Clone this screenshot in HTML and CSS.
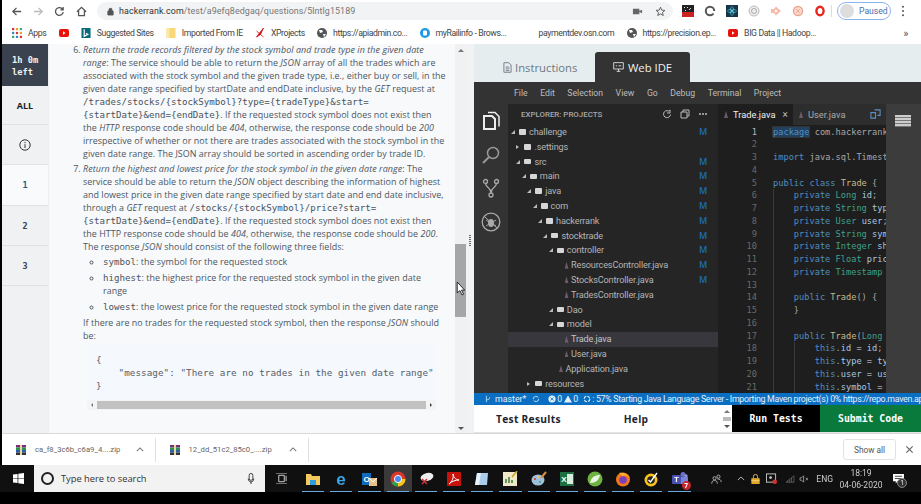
FILE: index.html
```html
<!DOCTYPE html>
<html lang="en">
<head>
<meta charset="utf-8">
<title>HackerRank test</title>
<link rel="stylesheet" href="styles.css">
</head>
<body>
<div class="screen">
  <header class="toolbar">
    <svg class="nav" viewBox="0 0 12 12"><path d="M11 6H2M6 2 2 6l4 4" class="st dk"/></svg>
    <svg class="nav" viewBox="0 0 12 12"><path d="M1 6h9M6 2l4 4-4 4" class="st lt"/></svg>
    <svg class="nav" viewBox="0 0 12 12"><path d="M10 6.500A4.200 4.200 0 1 1 8.800 3L10 4.200M10 1v3.200H7" class="st dk"/></svg>
    <svg class="nav" viewBox="0 0 12 12"><path d="M1 6.200 6 1.500l5 4.700M2.800 5v5.500h6.400V5" class="st dk"/></svg>
    <div class="omnibox">
      <svg class="lock" viewBox="0 0 8 10"><path d="M1 4.500h6V9H1zM2.300 4.500V3a1.700 1.700 0 0 1 3.400 0v1.500" fill="#555" stroke="#555"/></svg>
      <span class="url"><b>hackerrank.com</b>/test/a9efq8edgaq/questions/5lntlg15189</span>
      <span class="grow"></span>
      <svg class="omni-ic" viewBox="0 0 12 12"><path d="M1 3h7v6H1zM8 5.500 11 4v4L8 6.500" fill="#666"/></svg>
      <svg class="omni-ic" viewBox="0 0 12 12"><path d="m6 1.300 1.400 3.200 3.400.3-2.600 2.200.8 3.400L6 8.600l-3 1.800.8-3.400L1.200 4.800l3.400-.3z" fill="none" stroke="#555"/></svg>
    </div>
    <div class="exts">
      <svg viewBox="0 0 12 12"><rect width="12" height="12" fill="#222"/><rect y="7" width="12" height="5" fill="#c22"/><path d="M2 2h1v1H2zm3 0h1v1H5zm3 1h1v1H8zM3 5h1v1H3zm4-1h1v1H7z" fill="#ddd"/></svg>
      <svg viewBox="0 0 12 12"><circle cx="6" cy="6" r="4.200" fill="none" stroke="#555" stroke-width="2"/><path d="M7 6h5v5z" fill="#fff"/></svg>
      <svg viewBox="0 0 12 12"><rect width="12" height="12" fill="#17364a"/><circle cx="6" cy="6" r="1.200" fill="#5cd"/><ellipse cx="6" cy="6" rx="4.500" ry="1.800" fill="none" stroke="#5cd" stroke-width=".6"/><ellipse cx="6" cy="6" rx="1.800" ry="4.500" fill="none" stroke="#5cd" stroke-width=".6"/></svg>
      <svg viewBox="0 0 12 12"><circle cx="6" cy="6" r="5" fill="#eee" stroke="#bbb"/><circle cx="6" cy="6" r="2.500" fill="none" stroke="#aaa"/></svg>
      <svg viewBox="0 0 12 12"><path d="M1 4h3l2-2.500L11 6 6 10.500 4 8H1z" fill="#f9b9a8"/><circle cx="6" cy="6" r="1.300" fill="#fff"/></svg>
      <svg viewBox="0 0 12 12"><circle cx="6" cy="6" r="4.500" fill="#fbdcd2" stroke="#f0a58e" stroke-width="1.500"/><path d="m4 4 4 4M8 4 4 8" stroke="#f0a58e"/></svg>
      <svg viewBox="0 0 12 12"><ellipse cx="6" cy="6" rx="3.600" ry="4.300" fill="none" stroke="#e8271c" stroke-width="2.400"/></svg>
    </div>
    <span class="tb-sep"></span>
    <div class="paused"><span class="avatar"></span>Paused</div>
    <svg class="menu-dots" viewBox="0 0 4 14"><circle cx="2" cy="2" r="1.200"/><circle cx="2" cy="7" r="1.200"/><circle cx="2" cy="12" r="1.200"/></svg>
  </header>

  <nav class="bookmarks">
    <span class="bm"><svg class="bm-i" viewBox="0 0 9 9"><path d="M0 0h2v2H0z" fill="#d33"/><path d="M3.500 0h2v2h-2z" fill="#e8a020"/><path d="M7 0h2v2H7z" fill="#3a7"/><path d="M0 3.500h2v2H0z" fill="#38c"/><path d="M3.500 3.500h2v2h-2z" fill="#d33"/><path d="M7 3.500h2v2H7z" fill="#e8a020"/><path d="M0 7h2v2H0z" fill="#3a7"/><path d="M3.500 7h2v2h-2z" fill="#38c"/><path d="M7 7h2v2H7z" fill="#d33"/></svg>Apps</span>
    <span class="bm"><svg class="bm-i yt" viewBox="0 0 10 8"><rect width="10" height="8" rx="2" fill="#e8120c"/><path d="m4 2.200 2.500 1.800L4 5.800z" fill="#fff"/></svg></span>
    <span class="bm"><svg class="bm-i" viewBox="0 0 10 11"><rect width="10" height="11" fill="#0b6a7a"/><path d="M3 1.500v7.500l4-2L5 5.800" fill="none" stroke="#fff" stroke-width="1.300"/></svg>Suggested Sites</span>
    <span class="bm"><svg class="bm-i" viewBox="0 0 9 10"><path d="M0 0h9v10H0z" fill="#f8d878"/><path d="M0 0h3v10H0z" fill="#fbe7a6"/></svg>Imported From IE</span>
    <span class="bm"><svg class="bm-i" viewBox="0 0 9 10"><path d="M8 0 4 5l-3 4 4-2.500zM1 3l7 6" stroke="#c11" fill="#c11" stroke-width=".8"/></svg>XProjects</span>
    <span class="bm"><svg class="bm-i" viewBox="0 0 10 10"><circle cx="5" cy="5" r="5" fill="#555"/><path d="M2 2h3l1 2-3 1zM6 6h3L7 9z" fill="#fff"/></svg>https://apiadmin.co...</span>
    <span class="bm"><svg class="bm-i" viewBox="0 0 10 10"><circle cx="5" cy="5" r="5" fill="#1e9ae6"/><rect x="3" y="2.500" width="4" height="5" rx="1" fill="#fff"/></svg>myRailinfo - Brows...</span>
    <span class="bm bm-far">paymentdev.osn.com</span>
    <span class="bm"><svg class="bm-i" viewBox="0 0 10 10"><circle cx="5" cy="5" r="5" fill="#555"/><path d="M2 2h3l1 2-3 1zM6 6h3L7 9z" fill="#fff"/></svg>https://precision.ep...</span>
    <span class="bm"><svg class="bm-i yt" viewBox="0 0 10 8"><rect width="10" height="8" rx="2" fill="#e8120c"/><path d="m4 2.200 2.500 1.800L4 5.800z" fill="#fff"/></svg>BIG Data || Hadoop...</span>
    <span class="grow"></span>
    <span class="more">»</span>
  </nav>

  <main class="app">
    <aside class="rail">
      <div class="timer">1h 0m<br>left</div>
      <div class="rail-item rail-all">ALL</div>
      <div class="rail-item"><svg class="info" viewBox="0 0 12 12"><circle cx="6" cy="6" r="5.200" fill="none" stroke="#333"/><path d="M6 3v1.200M6 5.200V9" stroke="#333"/></svg></div>
      <div class="rail-item rail-active">1</div>
      <div class="rail-item rail-num">2</div>
      <div class="rail-item rail-num">3</div>
    </aside>

    <section class="problem">
      <ol class="steps" start="6">
        <li><i>Return the trade records filtered by the stock symbol and trade type in the given date<br>range</i>: The service should be able to return the <i>JSON</i> array of all the trades which are<br>associated with the stock symbol and the given trade type, i.e., either buy or sell, in the<br>given date range specified by startDate and endDate inclusive, by the <i>GET</i> request at<br><code>/trades/stocks/{stockSymbol}?type={tradeType}&amp;start=</code><br><code>{startDate}&amp;end={endDate}</code>. If the requested stock symbol does not exist then<br>the <i>HTTP</i> response code should be <i>404</i>, otherwise, the response code should be <i>200</i><br>irrespective of whether or not there are trades associated with the stock symbol in the<br>given date range. The JSON array should be sorted in ascending order by trade ID.</li>
        <li><i>Return the highest and lowest price for the stock symbol in the given date range</i>: The<br>service should be able to return the <i>JSON</i> object describing the information of highest<br>and lowest price in the given date range specified by start date and end date inclusive,<br>through a <i>GET</i> request at <code>/stocks/{stockSymbol}/price?start=</code><br><code>{startDate}&amp;end={endDate}</code>. If the requested stock symbol does not exist then<br>the HTTP response code should be <i>404</i>, otherwise, the response code should be <i>200</i>.<br>The response <i>JSON</i> should consist of the following three fields:
          <ul class="fields">
            <li><code>symbol</code>: the symbol for the requested stock</li>
            <li><code>highest</code>: the highest price for the requested stock symbol in the given date<br>range</li>
            <li><code>lowest</code>: the lowest price for the requested stock symbol in the given date range</li>
          </ul>
          <p class="after">If there are no trades for the requested stock symbol, then the response <i>JSON</i> should<br>be:</p>
          <div class="codebox">
<pre>{
    "message": "There are no trades in the given date range"
}</pre>
            <div class="hscroll"><span class="ar-l"></span><span class="hthumb"></span><span class="ar-r"></span></div>
          </div>
        </li>
      </ol>
    </section>

    <div class="vscroll"><span class="ar-u"></span><span class="vgap"></span><span class="vthumb"></span><span class="grow"></span><span class="ar-d"></span></div>
    <div class="gutter"><span class="grip"></span></div>

    <section class="right">
      <div class="tabs">
        <div class="tab"><svg class="tab-i" viewBox="0 0 10 12"><path d="M1 .7h5.500L9 3.200v8.100H1zM3 5.500h4M3 7.500h4M3 9.500h4" fill="none" stroke="#6d7882"/></svg>Instructions</div>
        <div class="tab tab-on"><svg class="tab-i2" viewBox="0 0 12 11"><path d="M.7.7h10.600v7H.7zM4 10.300h4M6 7.700v2.600M3 4.200h1.500M6 4.200h3" fill="none" stroke="#ddd"/></svg>Web IDE</div>
      </div>
      <div class="menubar"><span>File</span><span>Edit</span><span>Selection</span><span>View</span><span>Go</span><span>Debug</span><span>Terminal</span><span>Project</span></div>
      <div class="ide">
        <div class="activity">
          <svg viewBox="0 0 20 20"><path d="M3 5h8l3 3v10H3z" fill="none" stroke="#eee" stroke-width="2"/><path d="M7 1.500h7l4 4v10" fill="none" stroke="#eee" stroke-width="1.500"/></svg>
          <svg viewBox="0 0 20 20"><circle cx="12" cy="8" r="5.500" fill="none" stroke="#999" stroke-width="1.500"/><path d="M8 12 2 18" stroke="#999" stroke-width="2"/></svg>
          <svg viewBox="0 0 20 20"><circle cx="4.500" cy="3.500" r="2" fill="none" stroke="#aaa" stroke-width="1.300"/><circle cx="15.500" cy="3.500" r="2" fill="none" stroke="#aaa" stroke-width="1.300"/><circle cx="10" cy="17" r="2" fill="none" stroke="#aaa" stroke-width="1.300"/><path d="M4.500 5.500C5 10 10 9 10 15M15.500 5.500C15 10 10 9 10 15" fill="none" stroke="#aaa" stroke-width="1.300"/></svg>
          <svg viewBox="0 0 20 20"><circle cx="10" cy="10" r="8.800" fill="none" stroke="#aaa" stroke-width="1.300"/><ellipse cx="10" cy="11" rx="3" ry="4" fill="#aaa"/><path d="M4 5l12 11M5 8l3 2M5 14l3-2M15 8l-3 2M15 14l-3-2" stroke="#aaa"/></svg>
        </div>
        <div class="explorer">
          <div class="ex-head"><span>EXPLORER: PROJECTS</span><span class="grow"></span>
            <svg viewBox="0 0 10 10"><path d="M8.500 5.500A3.500 3.500 0 1 1 6.500 2L8 1v3H5" fill="none" stroke="#bbb"/></svg>
            <svg viewBox="0 0 10 10"><path d="M1 3h6v6H1zM3 3V1h6v6H7" fill="none" stroke="#bbb"/></svg>
            <svg viewBox="0 0 10 10"><path d="M1 5h8" stroke="#bbb" stroke-width="1.600" stroke-dasharray="2 1"/></svg>
          </div>
          <div class="tree">
            <div class="row d0"><i class="open"></i><b class="folder"></b><span>challenge</span><em>M</em></div>
            <div class="row d1"><i class="closed"></i><b class="folder"></b><span>.settings</span></div>
            <div class="row d1"><i class="open"></i><b class="folder"></b><span>src</span><em>M</em></div>
            <div class="row d2"><i class="open"></i><b class="folder"></b><span>main</span><em>M</em></div>
            <div class="row d3"><i class="open"></i><b class="folder"></b><span>java</span><em>M</em></div>
            <div class="row d4"><i class="open"></i><b class="folder"></b><span>com</span><em>M</em></div>
            <div class="row d5"><i class="open"></i><b class="folder"></b><span>hackerrank</span><em>M</em></div>
            <div class="row d6"><i class="open"></i><b class="folder"></b><span>stocktrade</span><em>M</em></div>
            <div class="row d7"><i class="open"></i><b class="folder"></b><span>controller</span><em>M</em></div>
            <div class="row d9f"><b class="jfile"></b><span>ResourcesController.java</span><em>M</em></div>
            <div class="row d9f"><b class="jfile"></b><span>StocksController.java</span><em>M</em></div>
            <div class="row d9f"><b class="jfile"></b><span>TradesController.java</span></div>
            <div class="row d7"><i class="open"></i><b class="folder"></b><span>Dao</span></div>
            <div class="row d7"><i class="open"></i><b class="folder"></b><span>model</span></div>
            <div class="row d9f row-sel"><b class="jfile"></b><span>Trade.java</span></div>
            <div class="row d9f"><b class="jfile"></b><span>User.java</span></div>
            <div class="row d8f"><b class="jfile"></b><span>Application.java</span></div>
            <div class="row d3"><i class="closed"></i><b class="folder"></b><span>resources</span></div>
          </div>
        </div>
        <div class="editor">
          <div class="ed-tabs">
            <div class="ed-tab ed-on"><b class="jfile"></b><span>Trade.java</span><u>×</u></div>
            <div class="ed-tab ed-off"><b class="jfile"></b><span>User.java</span></div>
            <div class="ed-action"><svg viewBox="0 0 12 12"><path d="M1 4h5v6H1zM5 1h6v6H8" fill="none" stroke="#5b8fc0" stroke-width="1.200"/></svg></div>
          </div>
          <div class="code">
            <div class="nums"><span class="cur">1</span><span>2</span><span>3</span><span>4</span><span>5</span><span>6</span><span>7</span><span>8</span><span>9</span><span>10</span><span>11</span><span>12</span><span>13</span><span>14</span><span>15</span><span>16</span><span>17</span><span>18</span><span>19</span><span>20</span><span>21</span></div>
            <div class="src">
              <div><a class="sel">package</a> com.hackerrank.stocktrade.model;</div>
              <div></div>
              <div><a>import</a> java.sql.Timestamp;</div>
              <div></div>
              <div><a>public class</a> <q>Trade</q> {</div>
              <div><s></s><a>private</a> <ins>Long</ins> <var>id</var>;</div>
              <div><s></s><a>private</a> <ins>String</ins> <var>type</var>;</div>
              <div><s></s><a>private</a> <ins>User</ins> <var>user</var>;</div>
              <div><s></s><a>private</a> <ins>String</ins> <var>symbol</var>;</div>
              <div><s></s><a>private</a> <ins>Integer</ins> <var>shares</var>;</div>
              <div><s></s><a>private</a> <ins>Float</ins> <var>price</var>;</div>
              <div><s></s><a>private</a> <ins>Timestamp</ins> <var>timestamp</var>;</div>
              <div><s></s></div>
              <div><s></s><a>public</a> <q>Trade</q>() {</div>
              <div><s></s>}</div>
              <div><s></s></div>
              <div><s></s><a>public</a> <q>Trade</q>(<ins>Long</ins> <var>id</var>, <ins>String</ins> <var>type</var>);</div>
              <div><s></s><s></s><a>this</a>.<var>id</var> = <var>id</var>;</div>
              <div><s></s><s></s><a>this</a>.<var>type</var> = <var>type</var>;</div>
              <div><s></s><s></s><a>this</a>.<var>user</var> = <var>user</var>;</div>
              <div><s></s><s></s><a>this</a>.<var>symbol</var> = <var>symbol</var>;</div>
            </div>
          </div>
        </div>
        <div class="panel-side"><span class="hamb"></span></div>
      </div>
      <div class="status">
        <svg viewBox="0 0 8 10"><path d="M2 1v8M2 6c3 0 4-1 4-3" fill="none" stroke="#cfe6f8"/></svg><span class="st-branch">master*</span>
        <svg class="st-sync" viewBox="0 0 10 10"><path d="M1.500 5A3.500 3.500 0 0 1 8 3.500M8.500 5A3.500 3.500 0 0 1 2 6.500" fill="none" stroke="#e4f1fb"/></svg>
        <svg class="st-err" viewBox="0 0 10 10"><circle cx="5" cy="5" r="4.500" fill="#e4f1fb"/><path d="m3 3 4 4M7 3 3 7" stroke="#0a6fc2"/></svg><span>0</span>
        <svg class="st-warn" viewBox="0 0 10 10"><path d="M5 .5 10 9.500H0z" fill="#e4f1fb"/></svg><span>0</span>
        <svg class="st-spin" viewBox="0 0 10 10"><circle cx="5" cy="5" r="3.500" fill="none" stroke="#e4f1fb" stroke-width="1.400" stroke-dasharray="4 1.500"/></svg>
        <span class="st-msg">: 57% Starting Java Language Server - Importing Maven project(s) 0% https://repo.maven.apache.org</span>
      </div>
      <div class="actions">
        <button class="link-btn lb-test">Test Results</button>
        <button class="link-btn lb-help">Help</button>
        <span class="grow"></span>
        <div class="mini-scroll"><span class="ar-u"></span><span class="mini-thumb"></span><span class="ar-d"></span></div>
        <button class="run">Run Tests</button>
        <button class="submit">Submit Code</button>
      </div>
    </section>
    <svg class="cursor" viewBox="0 0 10 14"><path d="M1 1v10l2.500-2 2 4 1.500-.7-2-3.800H8z" fill="#fff" stroke="#111" stroke-width=".8"/></svg>
  </main>

  <footer class="downloads">
    <div class="dl"><svg class="rar" viewBox="0 0 12 12"><path d="M1 1h10v2.500H1z" fill="#7b2d7b"/><path d="M1 3.500h10V6H1z" fill="#2f8f4e"/><path d="M1 6h10v2.500H1z" fill="#2d5fb0"/><path d="M1 8.500h10V11H1z" fill="#333"/><path d="M5 1h2v10H5z" fill="#e8d9a0"/></svg><span class="dl-name">ca_f8_3c6b_c6a9_4....zip</span><svg class="chev" viewBox="0 0 10 6"><path d="m1 5 4-4 4 4" fill="none" stroke="#777" stroke-width="1.300"/></svg></div>
    <div class="dl"><svg class="rar" viewBox="0 0 12 12"><path d="M1 1h10v2.500H1z" fill="#7b2d7b"/><path d="M1 3.500h10V6H1z" fill="#2f8f4e"/><path d="M1 6h10v2.500H1z" fill="#2d5fb0"/><path d="M1 8.500h10V11H1z" fill="#333"/><path d="M5 1h2v10H5z" fill="#e8d9a0"/></svg><span class="dl-name">12_dd_51c2_85c0_....zip</span><svg class="chev" viewBox="0 0 10 6"><path d="m1 5 4-4 4 4" fill="none" stroke="#777" stroke-width="1.300"/></svg></div>
    <span class="grow"></span>
    <button class="show-all">Show all</button>
    <svg class="dl-x" viewBox="0 0 10 10"><path d="m1.500 1.500 7 7M8.500 1.500l-7 7" stroke="#666" stroke-width="1.300"/></svg>
  </footer>

  <div class="taskbar">
    <svg class="win" viewBox="0 0 12 12"><path d="M0 1.700 5 1v4.600H0zM5.800.9 12 0v5.600H5.800zM0 6.400h5V11l-5-.7zM5.800 6.400H12V12l-6.200-.9z" fill="#fff"/></svg>
    <div class="search"><span class="ring"></span><span>Type here to search</span><span class="grow"></span><svg class="mic" viewBox="0 0 8 12"><rect x="2" y="0.500" width="4" height="7.500" rx="2" fill="none" stroke="#333"/><path d="M1 6c0 5 6 5 6 0M4 9.500V12" fill="none" stroke="#333"/></svg></div>
    <svg class="tv" viewBox="0 0 12 12"><path d="M3 2.500h6v7H3zM0 0h12M0 12h12M11 3v6" fill="none" stroke="#ddd"/></svg>
    <div class="apps">
      <span class="tk on"><svg viewBox="0 0 16 16"><path d="M1 3h5l1 2h8v9H1z" fill="#f4c95d"/><path d="M5 9h6v5H5z" fill="#2d9fe0"/></svg></span>
      <span class="tk on"><svg viewBox="0 0 16 16"><text x="8" y="13.500" text-anchor="middle" class="ie">e</text></svg></span>
      <span class="tk on"><svg viewBox="0 0 16 16"><rect x="1" y="2" width="9" height="12" fill="#0f6cbd"/><text x="5.500" y="11" text-anchor="middle" class="ol">O</text><path d="M8 7h8v8H8z" fill="#e8c08c"/><path d="m8 7 4 4 4-4" fill="none" stroke="#fff"/></svg></span>
      <span class="tk on act"><svg viewBox="0 0 16 16"><circle cx="8" cy="8" r="7.500" fill="#d9372c"/><path d="M8 8 1.500 12A7.500 7.500 0 0 0 8 15.500z" fill="#2e9e4f"/><path d="M8 8h7.500A7.500 7.500 0 0 1 8 15.500z" fill="#f5c518"/><circle cx="8" cy="8" r="3.600" fill="#4a8af4" stroke="#fff"/></svg></span>
      <span class="tk on"><svg viewBox="0 0 16 16"><ellipse cx="9" cy="6" rx="6.500" ry="4" fill="#eee" transform="rotate(-15 9 6)"/><path d="m4 8 5 5M9 8l-5 5" stroke="#c33" stroke-width="1.500"/></svg></span>
      <span class="tk on"><svg viewBox="0 0 16 16"><rect x="1" y="1" width="14" height="14" rx="1" fill="#c8120c"/><path d="M3 13c3-2 5-7 4-10 0 3 3 6 6 6-3 0-7 1-10 4z" fill="none" stroke="#fff"/></svg></span>
      <span class="tk on"><svg viewBox="0 0 16 16"><path d="M3 2h11l-1 12H1z" fill="#a9cdea"/><path d="M3 2h4L5 14H1z" fill="#e8f2fa"/></svg></span>
      <span class="tk on"><svg viewBox="0 0 16 16"><rect x="1" y="1" width="14" height="14" fill="#efe9c8"/><path d="M4 12V8M7 12V6M10 12V9" stroke="#3a7a3a" stroke-width="1.500"/><path d="m15 0-5 6" stroke="#c9a020" stroke-width="1.500"/></svg></span>
      <span class="tk on"><svg viewBox="0 0 16 16"><ellipse cx="7" cy="9" rx="6.500" ry="5.500" fill="#9fc0dc"/><circle cx="4" cy="8" r="1" fill="#d33"/><circle cx="7" cy="6" r="1" fill="#fc3"/><circle cx="9" cy="11" r="1" fill="#3a6"/><path d="m15 1-5 6" stroke="#d89040" stroke-width="2"/></svg></span>
      <span class="tk on"><svg viewBox="0 0 16 16"><rect x="1" y="1" width="14" height="14" fill="#1d6f42"/><rect x="8" y="3" width="6" height="10" fill="#d8eedd"/><text x="4.800" y="11" text-anchor="middle" class="xl">X</text></svg></span>
      <span class="tk on"><svg viewBox="0 0 16 16"><circle cx="8" cy="8" r="7.500" fill="#6db33f"/><path d="M3 12c1-6 5-8 10-8-1 5-4 8-10 8z" fill="#e8f5df"/></svg></span>
      <span class="tk on"><svg viewBox="0 0 16 16"><circle cx="8" cy="8.500" r="7" fill="#f2761b"/><circle cx="8" cy="9" r="3.800" fill="#7a3fc0"/><path d="M4 2c4-1 9 1 11 5-3-3-6-3-8-2z" fill="#ffb12a"/></svg></span>
      <span class="tk on"><svg viewBox="0 0 16 16"><circle cx="8" cy="9" r="6.500" fill="#f7c21a"/><circle cx="8" cy="9" r="3.800" fill="#222"/><path d="m5.500 9 2 2L14 2" fill="none" stroke="#fff" stroke-width="1.400"/></svg></span>
      <span class="tk on teams"><svg viewBox="0 0 16 16"><circle cx="11" cy="3.500" r="2.500" fill="#6b72c8"/><circle cx="14" cy="5" r="1.700" fill="#8f95dc"/><rect x="7" y="6" width="9" height="7" rx="1" fill="#7b83d8"/><rect x="0" y="4" width="9" height="9" rx="1" fill="#4a52b0"/><text x="4.500" y="11" text-anchor="middle" class="tm">T</text></svg><b>7</b></span>
    </div>
    <span class="grow"></span>
    <div class="tray">
      <svg class="people" viewBox="0 0 14 12"><circle cx="9.500" cy="3" r="2" fill="none" stroke="#ccc"/><circle cx="4.500" cy="5" r="2" fill="none" stroke="#ccc"/><path d="M1 12c0-3 1-4 3.500-4S8 9 8 12M8 6c3 0 5 1 5 4" fill="none" stroke="#ccc"/></svg>
      <svg class="chevup" viewBox="0 0 10 6"><path d="m1 5 4-4 4 4" fill="none" stroke="#ddd"/></svg>
      <svg class="t-lock" viewBox="0 0 10 12"><rect y="5" width="10" height="7" fill="#e0a92c"/><path d="M2.500 5V3a2.500 2.500 0 0 1 5 0v2M0 8h10" fill="none" stroke="#f0d27a"/></svg>
      <svg class="t-shield" viewBox="0 0 12 12"><rect x=".5" y="1" width="10" height="9" fill="none" stroke="#ccc"/><circle cx="5" cy="5" r="1.500" fill="#ccc"/><circle cx="9.500" cy="9.500" r="2.500" fill="#d9322a"/></svg>
      <svg class="t-wifi" viewBox="0 0 12 10"><path d="M1 9 11 1v8zM3 9V7.500M5.500 9V5.500M8 9V3.500" fill="none" stroke="#666"/></svg>
      <svg class="t-vol" viewBox="0 0 12 10"><path d="M1 3.500h2L5.500 1v8L3 6.500H1zM8 3.500l3 3M11 3.500l-3 3" fill="none" stroke="#ccc" stroke-width=".8"/></svg>
      <span class="eng">ENG</span>
      <div class="clock"><span>18:19</span><span>04-06-2020</span></div>
      <div class="notif"><svg viewBox="0 0 12 11"><path d="M0 0h12v8H5L3 10.500V8H0z" fill="#fff"/><path d="M2 2.500h8M2 5h8" stroke="#333"/></svg><b>1</b></div>
    </div>
  </div>
  <div class="bottom-band"></div>
</div>
</body>
</html>
```

FILE: styles.css
```css
* { box-sizing: border-box; }
html, body { margin: 0; padding: 0; width: 921px; height: 504px; overflow: hidden; background: #000; }
body { font-family: "Open Sans", "Liberation Sans", sans-serif; }
svg { display: block; flex: none; }
button { font-family: inherit; border: 0; padding: 0; }
.grow { flex: 1 1 auto; }

.screen { position: relative; width: 921px; height: 504px; display: flex; flex-direction: column; padding-left: 2px; filter: blur(.35px); }

/* browser toolbar */
.toolbar { height: 22px; background: #fff; display: flex; align-items: center; padding-left: 9px; flex: none; }
.nav { width: 11px; height: 11px; margin-right: 10.500px; }
.st { fill: none; stroke-width: 1.400; }
.dk { stroke: #555; }
.lt { stroke: #bbb; }
.omnibox { width: 576px; height: 18px; background: #f1f3f4; border-radius: 9px; display: flex; align-items: center; padding: 0 7px 0 10px; }
.lock { width: 7px; height: 9px; margin-right: 5px; }
.url { font: 8.900px "Roboto", sans-serif; color: #777; letter-spacing: .1px; }
.url b { font-weight: 400; color: #333; }
.omni-ic { width: 11px; height: 11px; margin-left: 12px; }
.exts { display: flex; gap: 10px; margin-left: 9px; }
.exts svg { width: 12px; height: 12px; }
.tb-sep { width: 1px; height: 12px; background: #ddd; margin: 0 5px; }
.paused { width: 54px; height: 18px; border: 1px solid #8ab4f0; border-radius: 9px; font: 8.600px "Roboto", sans-serif; color: #4a6fa8; display: flex; align-items: center; gap: 5px; padding-left: 2px; }
.avatar { width: 14px; height: 14px; border-radius: 50%; background: #ddd; }
.menu-dots { width: 4px; height: 12px; margin-left: 10px; fill: #555; }

/* bookmarks */
.bookmarks { height: 22px; background: #fff; display: flex; align-items: center; padding: 0 13px 0 10px; gap: 12.200px; font: 8.700px "Roboto", sans-serif; letter-spacing: -.38px; color: #444; flex: none; }
.bm { display: flex; align-items: center; gap: 6px; white-space: nowrap; }
.bm-i { width: 10px; height: 10px; }
.yt { height: 8px; }
.bm-far { margin-left: 20px; }
.more { font-size: 11px; color: #555; }

/* main area */
.app { height: 389px; display: flex; background: #f3f5f6; flex: none; overflow: hidden; }
.rail { width: 47px; flex: none; background: #eff1f2; font-family: "Open Sans", sans-serif; border-right: 1px solid #eceef0; }
.timer { height: 42px; background: #39424e; color: #f2f2f2; font: 700 8.700px/12px "DejaVu Sans Mono", monospace; padding: 10px 0 0 10px; }
.rail-item { height: 40.300px; padding-top: 1px; display: flex; align-items: center; justify-content: center; border-bottom: 1px solid #dfe2e5; font-weight: 700; font-size: 8.500px; color: #39424e; }
.rail-all { height: 39px; padding-top: 0; color: #222; font-size: 9px; }
.rail-active { background: #f8fafc; color: #1d5e85; font-family: "DejaVu Sans Mono", monospace; }
.rail-num { font-family: "DejaVu Sans Mono", monospace; }
.info { width: 12px; height: 12px; }

.problem { width: 406px; flex: none; background: #f7f9fb; color: #4d5661; font-size: 8.950px; line-height: 13px; letter-spacing: .03px; white-space: nowrap; overflow: hidden; }
.problem i { letter-spacing: .08px; }
.steps { margin: -1.500px 0 0; padding: 0 0 0 34px; }
.steps > li { margin-bottom: 2px; }
.problem code { font: 9.150px "DejaVu Sans Mono", monospace; color: #4a535d; letter-spacing: 0; }
.fields { margin: 2px 0 0; padding: 0 0 0 20px; list-style: circle; }
.fields li { margin-bottom: 3px; }
.after { margin: 3px 0 0; }
.codebox { margin: 3.500px 0 0 4px; width: 349px; height: 65px; background: #f5f8fc; display: flex; flex-direction: column; }
.codebox pre { margin: 0; padding: 8px 0 0 9px; font: 9.300px/13.200px "DejaVu Sans Mono", monospace; color: #555e68; flex: 1; }
.hscroll { height: 10px; background: #f3f4f6; display: flex; align-items: center; padding: 0 4px; }
.hthumb { flex: 1; height: 8px; background: #c1c1c1; margin: 0 4px; }
.ar-l { border: 2.500px solid transparent; border-right-color: #777; border-left: 0; }
.ar-r { border: 2.500px solid transparent; border-left-color: #444; border-right: 0; }
.ar-u { border: 3px solid transparent; border-bottom-color: #777; border-top: 0; display: block; }
.ar-d { border: 3px solid transparent; border-top-color: #555; border-bottom: 0; display: block; }

.vscroll { width: 11px; flex: none; background: #f1f1f1; display: flex; flex-direction: column; align-items: center; padding: 5px 0 3px; }
.vgap { height: 192px; }
.vthumb { width: 11px; height: 73px; background: #a6a6a6; }
.gutter { width: 8px; flex: none; background: #f0f2f3; display: flex; justify-content: center; padding-top: 191px; }
.grip { width: 2px; height: 12px; background: repeating-linear-gradient(#666 0 1px, transparent 1px 2px); }

/* right pane */
.right { flex: 1; min-width: 0; display: flex; flex-direction: column; background: #e6edef; }
.tabs { height: 38px; flex: none; display: flex; align-items: flex-end; padding-left: 29px; }
.tab { height: 30px; display: flex; align-items: center; gap: 3px; font-size: 11.300px; color: #6d7882; width: 92px; }
.tab-on { width: 95px; background: #333; color: #f0f0f0; border-radius: 3px 3px 0 0; justify-content: center; gap: 4px; }
.tab-i { width: 9px; height: 11px; }
.tab-i2 { width: 11px; height: 10px; }
.menubar { height: 22px; flex: none; background: #333; display: flex; align-items: center; padding-left: 40px; gap: 12.500px; font: 8.700px "Roboto", sans-serif; color: #bdbdbd; }
.ide { height: 289px; flex: none; display: flex; background: #333; font-family: "Roboto", sans-serif; }
.activity { width: 34px; flex: none; display: flex; flex-direction: column; align-items: center; gap: 13.500px; padding-top: 7px; }
.activity svg { width: 20px; height: 20px; }
.explorer { width: 210px; flex: none; background: #252526; overflow: hidden; }
.ex-head { height: 20.600px; display: flex; align-items: center; padding: 0 10px 0 13px; gap: 8px; font-size: 7.900px; font-weight: 500; color: #a8a8a8; white-space: nowrap; }
.ex-head svg { width: 10px; height: 10px; }
.row { height: 14.800px; display: flex; align-items: center; font-size: 9.150px; letter-spacing: -.15px; color: #b4b4b4; white-space: nowrap; padding-right: 11px; }
.row span { flex: 1; }
.row em { font-style: normal; font-size: 9px; color: #1f69ad; font-weight: 500; }
.row i { width: 4px; height: 4px; margin-right: 4px; flex: none; }
.row .open { border-bottom: 4px solid #bbb; border-left: 4px solid transparent; height: 0; width: 0; }
.row .closed { border-left: 3px solid #bbb; border-top: 2.500px solid transparent; border-bottom: 2.500px solid transparent; height: 0; width: 0; margin-right: 5px; }
.folder { width: 7px; height: 5.500px; background: #d6d6d6; margin-right: 3px; flex: none; border-radius: 1px; }
.jfile { width: 4px; height: 7px; background: #6c5a6a; margin-right: 2.500px; flex: none; clip-path: polygon(50% 0, 100% 100%, 0 100%); }
.d0 { padding-left: 3px; }
.d1 { padding-left: 8.400px; }
.d2 { padding-left: 13.800px; }
.d3 { padding-left: 19.200px; }
.d4 { padding-left: 24.600px; }
.d5 { padding-left: 30px; }
.d6 { padding-left: 35.400px; }
.d7 { padding-left: 40.800px; }
.d8f { padding-left: 51px; }
.d9f { padding-left: 56.500px; }
.row-sel { background: #37373d; color: #c4c4c4; }

.editor { width: 168px; flex: none; background: #1e1e1e; overflow: hidden; }
.ed-tabs { height: 21px; display: flex; background: #252526; }
.ed-tab { display: flex; align-items: center; font-size: 9.300px; white-space: nowrap; padding-left: 6px; }
.ed-tab .jfile { margin-right: 5px; }
.ed-on { width: 75px; background: #1e1e1e; color: #eee; }
.ed-on u { text-decoration: none; margin-left: 7px; color: #bbb; font-size: 10px; }
.ed-off { width: 71px; background: #2d2d2d; color: #aaa; }
.ed-action { flex: 1; background: #2d2d2d; display: flex; align-items: center; justify-content: center; }
.ed-action svg { width: 11px; height: 11px; }
.code { display: flex; padding-top: 0.600px; font: 8.660px/12.750px "DejaVu Sans Mono", monospace; }
.nums { width: 39px; flex: none; display: flex; flex-direction: column; align-items: flex-end; color: #6a6a6a; }
.nums span { height: 12.750px; }
.nums .cur { color: #b8b8b8; }
.src { margin-left: 16px; color: #a8a8a8; }
.src div { height: 12.750px; white-space: pre; }
.src a { color: #4f8fc0; }
.src a.sel { background: #22405f; outline: 1px solid #333; }
.src q { quotes: none; color: #c5b98a; }
.src q::before, .src q::after { content: none; }
.src ins { text-decoration: none; color: #3fa08c; }
.src var { font-style: normal; color: #a8c8e0; }
.src s { display: inline-block; width: 4ch; height: 12.750px; border-left: 1px solid #3a3a3a; vertical-align: top; text-decoration: none; }
.panel-side { flex: 1; background: #3c3c3c; padding: 11px 0 0 9px; }
.hamb { display: block; width: 16px; height: 12px; background: repeating-linear-gradient(#ccc 0 2px, #777 2px 3px); }

.status { height: 12px; flex: none; background: #0a6fc2; color: #e4f1fb; display: flex; align-items: center; font: 8.800px "Roboto", sans-serif; padding-left: 10px; white-space: nowrap; overflow: hidden; }
.status svg { width: 8px; height: 8px; }
.st-branch { margin-left: 3px; }
.st-sync { margin: 0 8px 0 6px; }
.st-err, .st-warn { margin-right: 1px; }
.st-warn { margin-left: 2px; }
.st-spin { margin: 0 1px 0 5px; }
.st-msg { letter-spacing: -.3px; }

.actions { height: 28px; flex: none; background: #fff; display: flex; align-items: stretch; border-bottom: 1px solid #e4e4e4; }
.link-btn { background: none; font-weight: 700; font-size: 10.200px; color: #1c2530; }
.lb-test { margin-left: 22px; letter-spacing: .3px; }
.lb-help { margin-left: 63px; letter-spacing: .3px; }
.mini-scroll { width: 11px; display: flex; flex-direction: column; align-items: center; justify-content: center; gap: 4px; }
.mini-thumb { width: 8px; height: 4px; background: #bbb; }
.run, .submit { font: 700 9.800px "DejaVu Sans Mono", monospace; color: #fff; }
.run { width: 88px; background: #000; }
.submit { width: 101px; background: #0a7a3c; }

.cursor { position: absolute; left: 456px; top: 281px; width: 11px; height: 15px; }

/* downloads */
.downloads { height: 32px; flex: none; background: #fff; border-top: 1px solid #d8d8d8; display: flex; align-items: center; padding: 0 7px 0 0; font: 7.700px "Roboto", sans-serif; color: #666; }
.dl { height: 24px; width: 153.500px; display: flex; align-items: center; padding-left: 13px; border-right: 1px solid #e0e0e0; }
.rar { width: 12px; height: 12px; margin-right: 8px; }
.dl-name { flex: 1; white-space: nowrap; }
.chev { width: 8px; height: 5px; margin-right: 11px; }
.show-all { width: 53px; height: 21px; background: #fff; border: 1px solid #e2e2e2; border-radius: 3px; font: 8.300px "Roboto", sans-serif; color: #555; margin-right: 9px; }
.dl-x { width: 9px; height: 9px; }

/* taskbar */
.taskbar { height: 27px; flex: none; background: #101010; display: flex; align-items: center; margin-left: -2px; padding-left: 13px; color: #ddd; }
.win { width: 11px; height: 11px; margin-right: 10px; }
.search { width: 231px; height: 27px; background: #f2f2f2; display: flex; align-items: center; padding: 0 10px 0 7px; color: #333; font-size: 9.300px; gap: 7px; }
.ring { width: 13px; height: 13px; border: 2px solid #222; border-radius: 50%; }
.mic { width: 8px; height: 11px; }
.tv { width: 11px; height: 11px; margin-left: 11px; }
.apps { display: flex; margin-left: 12px; }
.tk { width: 28.200px; height: 27px; display: flex; align-items: center; justify-content: center; position: relative; }
.tk svg { width: 16px; height: 16px; }
.tk.on::after { content: ""; position: absolute; left: 3px; right: 3px; bottom: 0; height: 1px; background: #6aa9df; }
.tk.act { background: #3a3a3a; }
.ie { font: 700 17px "Liberation Sans", sans-serif; fill: #3aa5e8; }
.ol { font: 700 8px "Liberation Sans", sans-serif; fill: #fff; }
.xl { font: 700 8px "Liberation Sans", sans-serif; fill: #fff; }
.tm { font: 700 8px "Liberation Sans", sans-serif; fill: #fff; }
.teams b { position: absolute; right: 3px; bottom: 2px; width: 9px; height: 9px; background: #c4262e; border-radius: 50%; font: 700 6.500px/9px "Open Sans", sans-serif; color: #fff; text-align: center; }
.tray { display: flex; align-items: center; padding-right: 12px; font: 8.500px "Roboto", sans-serif; color: #ccc; white-space: nowrap; }
.people { width: 11px; height: 10px; margin-right: 15px; }
.chevup { width: 8px; height: 5px; margin-right: 6px; }
.t-lock { width: 9px; height: 10px; margin-right: 6px; }
.t-shield { width: 11px; height: 11px; margin-right: 8px; }
.t-wifi { width: 10px; height: 8px; margin-right: 4px; }
.t-vol { width: 10px; height: 8px; margin-right: 7px; }
.eng { margin-right: 8px; }
.clock { display: flex; flex-direction: column; align-items: center; width: 40px; line-height: 12px; }
.notif { position: relative; width: 16px; margin-left: 12px; }
.notif svg { width: 11px; height: 10px; }
.notif b { position: absolute; left: 4px; top: 4px; width: 10px; height: 10px; border-radius: 50%; background: #333; border: 1px solid #888; font: 6.500px/8px "Open Sans", sans-serif; color: #fff; text-align: center; }
.bottom-band { flex: 1; background: #000; margin-left: -2px; }
```
